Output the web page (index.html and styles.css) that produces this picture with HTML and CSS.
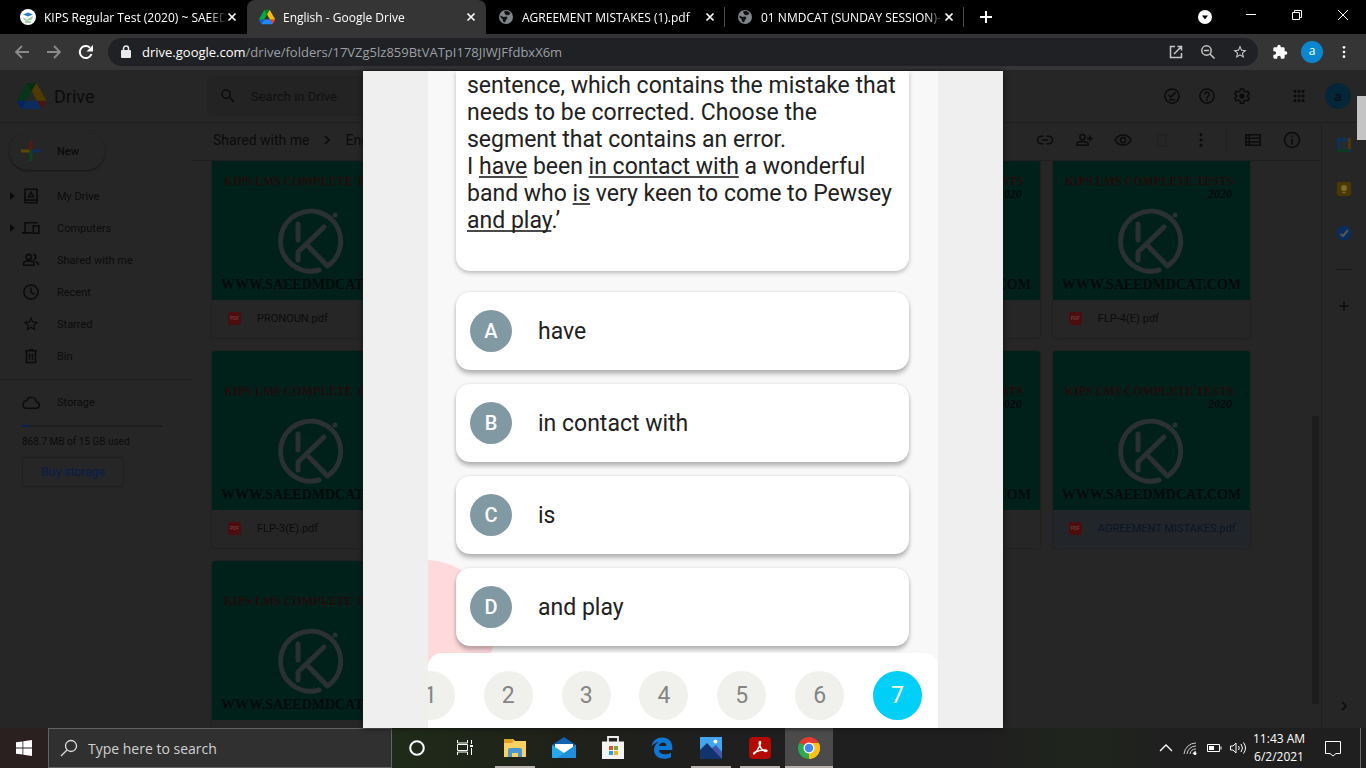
FILE: index.html
```html
<!DOCTYPE html>
<html lang="en">
<head>
  <meta charset="UTF-8" />
  <meta name="viewport" content="width=device-width, initial-scale=1.0" />
  <title>English - Google Drive</title>
  <link rel="stylesheet" href="styles.css">
</head>
<body>
  <svg class="defs" aria-hidden="true">
    <symbol id="drive-logo" viewBox="0 0 87 78">
      <path d="M6.6 66.85l3.85 6.65c.8 1.4 1.95 2.5 3.3 3.3L27.5 53H0c0 1.55.4 3.1 1.2 4.5z" fill="var(--c1)"/>
      <path d="M43.65 25L29.9 1.2c-1.35.8-2.5 1.9-3.3 3.3L1.2 48.5A9 9 0 0 0 0 53h27.5z" fill="var(--c2)"/>
      <path d="M73.55 76.8c1.35-.8 2.5-1.9 3.3-3.3l8.9-16c.8-1.4 1.2-2.95 1.2-4.5H59.8l5.85 11.5z" fill="var(--c3)"/>
      <path d="M43.65 25L57.4 1.2C56.05.4 54.5 0 52.9 0H34.4c-1.6 0-3.15.45-4.5 1.2z" fill="var(--c4)"/>
      <path d="M59.8 53H27.5L13.75 76.8c1.35.8 2.9 1.2 4.5 1.2h50.8c1.6 0 3.15-.45 4.5-1.2z" fill="var(--c5)"/>
      <path d="M73.4 26.5L60.7 4.5c-.8-1.4-1.95-2.5-3.3-3.3L43.65 25 59.8 53h27.45c0-1.55-.4-3.1-1.2-4.5z" fill="var(--c6)"/>
    </symbol>
    <symbol id="globe" viewBox="0 0 16 16">
      <circle cx="8" cy="8" r="7" fill="#80868b"/>
      <path d="M2.5 6.5l3 1.500 3-.5 1 1.500-1.500 2-1 2.500-2-1-.5-2.500-2-1.500zM6 2.500l3-.8 3.500 2.300-1.500 2-2 .2-2-1z" fill="#111"/>
    </symbol>
    <symbol id="close" viewBox="0 0 10 10"><path d="M1.500 1.500l7 7M8.500 1.500l-7 7" stroke="currentColor" stroke-width="1.700"/></symbol>
    <symbol id="search" viewBox="0 0 24 24"><path fill="currentColor" d="M20.500 19l-5.700-5.700a6.500 6.500 0 1 0-1.500 1.500l5.700 5.700zM5 9.500a4.500 4.500 0 1 1 9 0 4.500 4.500 0 0 1-9 0z"/></symbol>
    <symbol id="star" viewBox="0 0 24 24"><path fill="currentColor" d="M22 9.240l-7.190-.62L12 2 9.190 8.630 2 9.240l5.460 4.730L5.820 21 12 17.270 18.180 21l-1.630-7.030zM12 15.400l-3.760 2.270 1-4.280-3.320-2.880 4.380-.38L12 6.100l1.710 4.040 4.380.38-3.320 2.880 1 4.280z"/></symbol>
    <symbol id="more" viewBox="0 0 24 24"><g fill="currentColor"><circle cx="12" cy="5" r="2"/><circle cx="12" cy="12" r="2"/><circle cx="12" cy="19" r="2"/></g></symbol>
    <symbol id="chevron" viewBox="0 0 24 24"><path d="M9 6l6 6-6 6" fill="none" stroke="currentColor" stroke-width="2.500"/></symbol>
    <symbol id="k-logo" viewBox="2 0 70 70">
      <g fill="none" stroke="currentColor" stroke-width="5" stroke-linecap="round" stroke-linejoin="round">
        <path d="M24 18v16M50 21L24 46v8M33 39l20.500 21A30 30 0 1 0 45 64"/>
      </g>
      <circle cx="61" cy="9" r="2.500" fill="currentColor"/>
    </symbol>
  </svg>

  <header class="tabstrip">
    <div class="tab">
      <svg class="favicon" viewBox="0 0 16 16"><circle cx="8" cy="8" r="8" fill="#fff"/><path d="M3 5.500l5-2 5 2-5 2z" fill="#2c7fc4"/><path d="M3 8l4 3 6-4.500-1 4-5 1.500-3-1z" fill="#8fd08a"/><path d="M5 13h6" stroke="#4b9c57"/></svg>
      <span class="tab-title">KIPS Regular Test (2020) ~ SAEED</span>
      <button class="tab-close" aria-label="Close tab"><svg><use href="#close"/></svg></button>
    </div>
    <div class="tab active">
      <svg class="favicon bright"><use href="#drive-logo"/></svg>
      <span class="tab-title">English - Google Drive</span>
      <button class="tab-close" aria-label="Close tab"><svg><use href="#close"/></svg></button>
    </div>
    <div class="tab ruled">
      <svg class="favicon"><use href="#globe"/></svg>
      <span class="tab-title">AGREEMENT MISTAKES (1).pdf</span>
      <button class="tab-close" aria-label="Close tab"><svg><use href="#close"/></svg></button>
    </div>
    <div class="tab ruled">
      <svg class="favicon"><use href="#globe"/></svg>
      <span class="tab-title">01 NMDCAT (SUNDAY SESSION)-</span>
      <button class="tab-close" aria-label="Close tab"><svg><use href="#close"/></svg></button>
    </div>
    <button class="new-tab" aria-label="New tab"><svg viewBox="0 0 12 12"><path d="M6 0v12M0 6h12" stroke="#fff" stroke-width="2"/></svg></button>
    <div class="window-controls">
      <button aria-label="Search tabs"><svg viewBox="0 0 14 14"><circle cx="7" cy="7" r="7" fill="#fff"/><path d="M4 5.500h6L7 9.500z" fill="#000"/></svg></button>
      <button aria-label="Minimize"><svg viewBox="0 0 14 14"><path d="M2 6.500h10" stroke="#fff"/></svg></button>
      <button aria-label="Restore"><svg viewBox="0 0 14 14"><path d="M2.500 4.500h7v7h-7zM4.500 4.500v-2h7v7h-2" fill="none" stroke="#fff"/></svg></button>
      <button aria-label="Close"><svg viewBox="0 0 14 14"><path d="M2 2l10 10M12 2L2 12" stroke="#fff"/></svg></button>
    </div>
  </header>

  <nav class="toolbar">
    <button class="tool muted" aria-label="Back"><svg viewBox="0 0 16 16"><path d="M15 8H2M8 2L2 8l6 6" fill="none" stroke="currentColor" stroke-width="1.800"/></svg></button>
    <button class="tool muted" aria-label="Forward"><svg viewBox="0 0 16 16"><path d="M1 8h13M8 2l6 6-6 6" fill="none" stroke="currentColor" stroke-width="1.800"/></svg></button>
    <button class="tool" aria-label="Reload"><svg viewBox="0 0 16 16"><path d="M13.500 10A6 6 0 1 1 12 3.700" fill="none" stroke="currentColor" stroke-width="2"/><path d="M15 1v6.500H8.500z" fill="currentColor"/></svg></button>
    <div class="omnibox">
      <svg class="lock" viewBox="0 0 10 14"><path d="M1 5h8a1 1 0 0 1 1 1v6a1 1 0 0 1-1 1H1a1 1 0 0 1-1-1V6a1 1 0 0 1 1-1z" fill="#e8eaed"/><path d="M2.500 6V3.500a2.500 2.500 0 0 1 5 0V6" fill="none" stroke="#e8eaed" stroke-width="1.500"/></svg>
      <a class="url" href="#"><b>drive.google.com</b>/drive/folders/17VZg5lz859BtVATpI178JIWJFfdbxX6m</a>
      <button class="tool" aria-label="Open"><svg viewBox="0 0 16 16"><path d="M7 2.500H2.500v11h11V9M9.500 2.500h4v4M13.500 2.500L6 10" fill="none" stroke="currentColor" stroke-width="1.500"/></svg></button>
      <button class="tool" aria-label="Zoom"><svg viewBox="0 0 16 16"><circle cx="6.500" cy="6.500" r="4.700" fill="none" stroke="currentColor" stroke-width="1.500"/><path d="M4 6.500h5M10 10l4.500 4.500" stroke="currentColor" stroke-width="1.500"/></svg></button>
      <button class="tool" aria-label="Bookmark"><svg><use href="#star"/></svg></button>
    </div>
    <button class="tool" aria-label="Extensions"><svg viewBox="0 0 24 24"><path fill="currentColor" d="M20.500 11H19V7a2 2 0 0 0-2-2h-4V3.500a2.500 2.500 0 0 0-5 0V5H4a2 2 0 0 0-2 2v3.800h1.500a2.700 2.700 0 0 1 0 5.400H2V20c0 1.100.9 2 2 2h3.800v-1.500a2.700 2.700 0 0 1 5.400 0V22H17a2 2 0 0 0 2-2v-4h1.500a2.500 2.500 0 0 0 0-5z"/></svg></button>
    <button class="tool"><span class="profile">a</span></button>
    <button class="tool" aria-label="Menu"><svg><use href="#more"/></svg></button>
  </nav>

  <main class="drive">
    <header class="drive-header">
      <svg class="drive-mark"><use href="#drive-logo"/></svg>
      <span class="drive-name">Drive</span>
      <label class="drive-search">
        <svg><use href="#search"/></svg>
        <input type="text" placeholder="Search in Drive">
      </label>
      <div class="header-icons">
        <button aria-label="Ready for offline"><svg viewBox="0 0 24 24"><circle cx="12" cy="12" r="9.500" fill="none" stroke="currentColor" stroke-width="2"/><path d="M7.500 10.500l3 3L17 7M8 17h8" fill="none" stroke="currentColor" stroke-width="2"/></svg></button>
        <button aria-label="Support"><svg viewBox="0 0 24 24"><circle cx="12" cy="12" r="9.500" fill="none" stroke="currentColor" stroke-width="2"/><path d="M9 10a3 3 0 1 1 4.500 2.500c-1 .7-1.500 1-1.500 2.500M12 16v2.500" fill="none" stroke="currentColor" stroke-width="2"/></svg></button>
        <button aria-label="Settings"><svg viewBox="0 0 24 24"><path d="M10 2.500h4l.6 3 2.200 1.200 2.900-1 2 3.500-2.300 2v1.800l2.300 2-2 3.500-2.900-1-2.200 1.200-.6 3h-4l-.6-3-2.200-1.200-2.900 1-2-3.500 2.300-2v-1.800l-2.300-2 2-3.500 2.900 1 2.200-1.200z" fill="none" stroke="currentColor" stroke-width="2"/><circle cx="12" cy="12" r="3.500" fill="currentColor"/></svg></button>
        <button class="apps" aria-label="Google apps"><svg viewBox="0 0 24 24"><path d="M4 5h16M4 12h16M4 19h16" stroke="currentColor" stroke-width="4" stroke-dasharray="4 2"/></svg></button>
        <button class="account">a</button>
      </div>
    </header>

    <div class="drive-body">
      <aside class="sidebar">
        <button class="new-button">
          <svg viewBox="0 0 20 20"><path d="M10 0v10" stroke="#5a1712" stroke-width="3"/><path d="M10 9v11" stroke="#0b4420" stroke-width="3"/><path d="M0 10h8.500" stroke="#5c4700" stroke-width="3"/><path d="M11.500 10H20" stroke="#102d63" stroke-width="3"/></svg>
          New
        </button>
        <a class="nav-item" href="#"><i class="arrow"></i><svg viewBox="0 0 24 24"><path d="M4 3h16v18H4zM4 17.500h16" fill="none" stroke="currentColor" stroke-width="2.200"/><path d="M12 7l3.500 6h-7z" fill="none" stroke="currentColor" stroke-width="2"/></svg>My Drive</a>
        <a class="nav-item" href="#"><i class="arrow"></i><svg viewBox="0 0 24 24"><path d="M21 5H4v12M0 18.500h13M15 9h7.500v10H15z" fill="none" stroke="currentColor" stroke-width="2.200"/></svg>Computers</a>
        <a class="nav-item" href="#"><i></i><svg viewBox="0 0 24 24"><circle cx="9" cy="8" r="3.500" fill="none" stroke="currentColor" stroke-width="2.200"/><path d="M2 19v-2c0-5 14-5 14 0v2zM15 4.500a3.500 3.500 0 0 1 0 7M18 14c3 1 4 2 4 5" fill="none" stroke="currentColor" stroke-width="2.200"/></svg>Shared with me</a>
        <a class="nav-item" href="#"><i></i><svg viewBox="0 0 24 24"><circle cx="12" cy="12" r="9.500" fill="none" stroke="currentColor" stroke-width="2"/><path d="M12 6v6.500l4.500 2.500" fill="none" stroke="currentColor" stroke-width="2"/></svg>Recent</a>
        <a class="nav-item" href="#"><i></i><svg><use href="#star"/></svg>Starred</a>
        <a class="nav-item" href="#"><i></i><svg viewBox="0 0 24 24"><path d="M4 5h16M9 3.500h6M6 5v15.500h12V5M10 9v8M14 9v8" fill="none" stroke="currentColor" stroke-width="2"/></svg>Bin</a>
        <a class="nav-item storage" href="#"><i></i><svg viewBox="0 0 24 24"><path d="M19 10.500C18.500 3 8 2.500 6.500 9-.5 9.500 0 19 6 19h12.500c6 0 6-8 .5-8.500z" fill="none" stroke="currentColor" stroke-width="2"/></svg>Storage</a>
        <div class="quota"><div class="quota-used"></div></div>
        <p class="quota-text">868.7 MB of 15 GB used</p>
        <button class="buy">Buy storage</button>
      </aside>

      <section class="files">
        <div class="crumbs">
          <a href="#">Shared with me</a>
          <svg><use href="#chevron"/></svg>
          <a href="#">English</a>
          <div class="actions">
            <button aria-label="Get link"><svg viewBox="0 0 24 24"><path d="M10 7H7a5 5 0 0 0 0 10h3M14 7h3a5 5 0 0 1 0 10h-3M8 12h8" fill="none" stroke="currentColor" stroke-width="2"/></svg></button>
            <button aria-label="Share"><svg viewBox="0 0 24 24"><circle cx="10" cy="8" r="3.500" fill="none" stroke="currentColor" stroke-width="2"/><path d="M2.500 19v-2c0-4 15-4 15 0v2zM20 6v8M16 10h8" fill="none" stroke="currentColor" stroke-width="2"/></svg></button>
            <button aria-label="Preview"><svg viewBox="0 0 24 24"><path d="M1.500 12c4-9 17-9 21 0-4 9-17 9-21 0z" fill="none" stroke="currentColor" stroke-width="2"/><circle cx="12" cy="12" r="3.500" fill="none" stroke="currentColor" stroke-width="2"/></svg></button>
            <button class="off" aria-label="Remove"><svg viewBox="0 0 24 24"><path d="M5 5h14M7 5v15h10V5" fill="none" stroke="currentColor" stroke-width="2"/></svg></button>
            <button aria-label="More actions"><svg><use href="#more"/></svg></button>
            <span class="rule"></span>
            <button aria-label="List view"><svg viewBox="0 0 24 24"><path d="M2.500 5h19v14h-19zM2.500 9.500h19M2.500 14.500h19M7 5v14" fill="none" stroke="currentColor" stroke-width="2"/></svg></button>
            <button aria-label="View details"><svg viewBox="0 0 24 24"><circle cx="12" cy="12" r="10" fill="none" stroke="currentColor" stroke-width="2"/><path d="M12 6v2.500M12 10.500V18" stroke="currentColor" stroke-width="2.200"/></svg></button>
          </div>
        </div>
        <div class="scroller">
          <div class="grid" id="grid"></div>
        </div>
        <div class="files-thumb"></div>
      </section>

      <aside class="side-panel">
        <svg viewBox="0 0 16 16"><path d="M1 1h14v14H1z" fill="#0f3057"/><path d="M12 1h3v11h-3z" fill="#493800"/><path d="M1 12h11v3H1z" fill="#0b3c1f"/><path d="M4 4h8v8H4z" fill="#262b30"/></svg>
        <svg viewBox="0 0 16 16"><rect x="1" y="1" width="14" height="14" rx="2" fill="#4a3a00"/><circle cx="8" cy="7" r="3" fill="#7a6a30"/><path d="M6.500 11.500h3" stroke="#7a6a30" stroke-width="1.500"/></svg>
        <svg viewBox="0 0 16 16"><circle cx="8" cy="8" r="7.500" fill="#0c2d5a"/><path d="M4.500 9l2.500 2 5-6" fill="none" stroke="#555" stroke-width="2"/></svg>
        <hr>
        <svg viewBox="0 0 16 16"><path d="M8 3v10M3 8h10" stroke="#0c0c0c" stroke-width="1.500"/></svg>
        <svg class="collapse"><use href="#chevron"/></svg>
      </aside>
    </div>

    <article class="preview">
      <div class="phone">
        <div class="question">
          sentence, which contains the mistake that<br>
          needs to be corrected. Choose the<br>
          segment that contains an error.<br>
          I <u>have</u> been <u>in contact with</u> a wonderful<br>
          band who <u>is</u> very keen to come to Pewsey<br>
          <u>and play</u>.’
        </div>
        <button class="option"><span>A</span>have</button>
        <button class="option"><span>B</span>in contact with</button>
        <button class="option"><span>C</span>is</button>
        <button class="option"><span>D</span>and play</button>
        <div class="pager">
          <div class="pages">
            <button>1</button><button>2</button><button>3</button><button>4</button><button>5</button><button>6</button><button class="current">7</button>
          </div>
        </div>
      </div>
    </article>
    <div class="page-thumb"></div>
  </main>

  <footer class="taskbar">
    <button class="start" aria-label="Start"><svg viewBox="0 0 16 16"><path d="M0 2.300L6.500 1.400v6.200H0zM7.300 1.300L16 0v7.600H7.300zM0 8.400h6.500v6.200L0 13.700zM7.300 8.400H16V16l-8.700-1.300z" fill="#fff"/></svg></button>
    <label class="task-search">
      <svg viewBox="0 0 18 18"><circle cx="11" cy="7" r="5.500" fill="none" stroke="#ddd" stroke-width="1.300"/><path d="M7 11l-6 6" stroke="#ddd" stroke-width="1.300"/></svg>
      <input type="text" placeholder="Type here to search">
    </label>
    <div class="apps-row">
      <button aria-label="Cortana"><svg viewBox="0 0 24 24"><circle cx="12" cy="12" r="6.800" fill="none" stroke="#fff" stroke-width="2"/></svg></button>
      <button aria-label="Task view"><svg viewBox="0 0 24 24"><path d="M3.500 4v3h10V4M3.500 19v-3h10v3M3.500 8.500h10v6h-10zM17.500 4v4M17.500 12v7" fill="none" stroke="#fff"/><path d="M16 9h3v2h-3z" fill="#fff"/></svg></button>
      <button class="open" aria-label="File Explorer"><svg viewBox="0 0 24 24"><path d="M1 3h9l2 2h11v16H1z" fill="#f9d262"/><path d="M1 3h8l1.500 2L9 7H1z" fill="#e0a021"/><path d="M5 21v-7a2 2 0 0 1 2-2h10a2 2 0 0 1 2 2v7h-4v-4H9v4z" fill="#4a98cf"/></svg></button>
      <button aria-label="Mail"><svg viewBox="0 0 24 24"><path d="M0 9l12-8 12 8v5H0z" fill="#1063b0"/><path d="M3 8h18v5l-9 5-9-5z" fill="#fff"/><path d="M0 9l12 8L24 9v13H0z" fill="#28a8ea"/><path d="M24 9v13H5z" fill="#1f8fdb"/></svg></button>
      <button aria-label="Store"><svg viewBox="0 0 24 24"><path d="M7 6V1h10v5" fill="none" stroke="#eee" stroke-width="1.800"/><path d="M1 5.500h22V23H1z" fill="#f3f3f3"/><path d="M8 10h4v4H8z" fill="#d35230"/><path d="M13 10h4v4h-4z" fill="#7ba732"/><path d="M8 15h4v4H8z" fill="#2f9fd8"/><path d="M13 15h4v4h-4z" fill="#efb320"/></svg></button>
      <button aria-label="Edge"><svg viewBox="0 0 24 24"><path d="M1.500 10.500C2.500 4.500 7 1.500 12.300 1.500c6.500 0 10 4.500 10 9.800V14H9c.3 5 7.500 5.300 12 2.800v4.400C14 24.500 4 22.500 4 14c0-4 2-6.500 5-8-3.500.5-6 2-7.500 4.500zM9 10h7.500C16.500 5 9.500 5.500 9 10z" fill="#1078d4"/></svg></button>
      <button class="open" aria-label="Photos"><svg viewBox="0 0 24 24"><path d="M1 1h22v22H1z" fill="#42a5f0"/><path d="M13 12l4-3 6 7v7H8z" fill="#4458a6"/><path d="M1 14l7-7 15 16H1z" fill="#12346e"/><circle cx="16.500" cy="5.500" r="2" fill="#fff"/></svg></button>
      <button class="open" aria-label="Acrobat Reader"><svg viewBox="0 0 24 24"><rect x="1" y="1" width="22" height="22" rx="4" fill="#b30b00"/><path d="M6 18c-2-1 4-4 11-4 4 0 1 3-2 0-3-2-5-8-3-8.500 2 0-2 9.500-6 12.500z" fill="none" stroke="#fff" stroke-width="1.500"/></svg></button>
      <button class="open focused" aria-label="Chrome"><svg viewBox="0 0 24 24"><path d="M12 12L2.500 6.500A11 11 0 0 1 21.500 6.500z" fill="#e33b2e"/><path d="M12 12l9.500-5.500A11 11 0 0 1 12 23z" fill="#fbc116"/><path d="M12 12l0 11A11 11 0 0 1 2.500 6.500z" fill="#2da94f"/><path d="M12 7h9.800a11 11 0 0 1-9.800 16l4.500-8.500z" fill="#fbc116"/><circle cx="12" cy="12" r="5.500" fill="#fff"/><circle cx="12" cy="12" r="4.200" fill="#4285f4"/></svg></button>
    </div>
    <div class="tray">
      <svg viewBox="0 0 16 16"><path d="M2 11l6-6 6 6" fill="none" stroke="#fff" stroke-width="1.300"/></svg>
      <svg viewBox="0 0 16 16"><path d="M2 14A12 12 0 0 1 14 3M5 14a9 9 0 0 1 9-8M8 14a6 6 0 0 1 6-5M11 14a3 3 0 0 1 3-2.500" fill="none" stroke="#ccc"/><circle cx="13" cy="13.500" r="1.500" fill="#fff"/></svg>
      <svg viewBox="0 0 16 16"><path d="M1.500 4.500h12v7h-12zM15 6.500v3" fill="none" stroke="#fff"/><path d="M3 6h5v4H3z" fill="#fff"/></svg>
      <svg viewBox="0 0 16 16"><path d="M.5 6H3l3-3v10l-3-3H.5zM8.500 6q1.500 2 0 4M11 4q3 4 0 8M13.500 2.500q4 5.500 0 11" fill="none" stroke="#fff"/></svg>
    </div>
    <time class="clock">11:43 AM<br>6/2/2021</time>
    <button class="notify" aria-label="Notifications"><svg viewBox="0 0 18 18"><path d="M1.500 2.500h15v12H12l-3 2.500-3-2.500H1.500z" fill="none" stroke="#fff"/></svg></button>
  </footer>

  <script>
    // col is the grid column the card sits in
    const files = [
      { col: 1, name: "PRONOUN.pdf" },
      { col: 4, name: "" },
      { col: 5, name: "FLP-4(E).pdf" },
      { col: 1, name: "FLP-3(E).pdf" },
      { col: 4, name: "" },
      { col: 5, name: "AGREEMENT MISTAKES.pdf", selected: true },
      { col: 1, name: "" }
    ];

    const grid = document.getElementById("grid");
    files.forEach(file => {
      const card = document.createElement("div");
      card.className = "card col-" + file.col + (file.selected ? " selected" : "");
      card.innerHTML = `
        <div class="thumb">
          <p class="thumb-title">KIPS LMS COMPLETE TESTS</p>
          <p class="thumb-year">2020</p>
          <svg><use href="#k-logo"/></svg>
          <p class="thumb-site">WWW.SAEEDMDCAT.COM</p>
        </div>
        <div class="card-name"><span class="pdf">PDF</span>${file.name}</div>`;
      grid.appendChild(card);
    });
  </script>
</body>
</html>
```
FILE: styles.css
```css
* {
  box-sizing: border-box;
}

body {
  margin: 0;
  height: 100vh;
  display: flex;
  flex-direction: column;
  overflow: hidden;
  background: #262626;
  font-family: "Open Sans", "Noto Sans", sans-serif;
  font-size: 12px;
  color: #fff;
}

button {
  display: flex;
  align-items: center;
  justify-content: center;
  flex: none;
  padding: 0;
  border: none;
  background: none;
  font: inherit;
  color: inherit;
}

a {
  color: inherit;
  text-decoration: none;
}

p {
  margin: 0;
}

svg {
  flex: none;
}

.defs {
  position: absolute;
  width: 0;
  height: 0;
}

/* tabs */

.tabstrip {
  display: flex;
  height: 34px;
  flex: none;
  padding-left: 8px;
  background: #000;
}

.tab {
  display: flex;
  align-items: center;
  flex: 0 1 239px;
  min-width: 0;
  padding: 0 10px 0 12px;
}

.tab.active {
  background: #353535;
  border-radius: 8px 8px 0 0;
}

.tab.ruled {
  background: linear-gradient(#4a4a4a, #4a4a4a) right center / 1px 20px no-repeat;
}

.favicon {
  width: 16px;
  height: 16px;
  margin-right: 8px;
}

.bright {
  --c1: #0066da;
  --c2: #00ac47;
  --c3: #ea4335;
  --c4: #00832d;
  --c5: #2684fc;
  --c6: #ffba00;
}

.tab-title {
  flex: 1;
  overflow: hidden;
  white-space: nowrap;
  mask-image: linear-gradient(to right, #000 90%, transparent);
}

.tab-close svg {
  width: 10px;
  height: 10px;
}

.tab-close {
  width: 10px;
}

.new-tab {
  width: 44px;
}

.new-tab svg {
  width: 12px;
  height: 12px;
}

.window-controls {
  display: flex;
  margin-left: auto;
}

.window-controls button {
  width: 46px;
  height: 30px;
}

.window-controls button:first-child {
  height: 34px;
}

.window-controls svg {
  width: 14px;
  height: 14px;
}

/* address bar */

.toolbar {
  display: flex;
  align-items: center;
  flex: none;
  height: 36px;
  padding: 0 6px;
  background: #353535;
}

.tool {
  width: 32px;
  height: 28px;
}

.tool svg {
  width: 16px;
  height: 16px;
}

.muted {
  color: #8a8a8a;
}

.omnibox {
  display: flex;
  align-items: center;
  flex: 1;
  height: 28px;
  margin: 0 6px;
  padding: 0 2px 0 13px;
  border-radius: 14px;
  background: #202124;
  color: #c4c7c5;
}

.lock {
  width: 10px;
  height: 14px;
  margin-right: 11px;
}

.url {
  flex: 1;
  font-size: 13px;
  color: #9aa0a6;
}

.url b {
  font-weight: normal;
  color: #fff;
}

.profile {
  width: 22px;
  height: 22px;
  border-radius: 50%;
  background: #0b87d1;
  line-height: 20px;
}

/* drive */

.drive {
  position: relative;
  display: flex;
  flex-direction: column;
  flex: 1;
  min-height: 0;
  font-family: Roboto, sans-serif;
  font-size: 11px;
  color: #0b0b0b;
}

.drive-header {
  display: flex;
  align-items: center;
  flex: none;
  height: 53px;
  padding: 0 15px 0 17px;
  border-bottom: 1px solid #1f1f1f;
}

.drive-mark {
  --c1: #04245c;
  --c2: #06351a;
  --c3: #4a1410;
  --c4: #062d14;
  --c5: #0b2c60;
  --c6: #4d3b00;
  width: 29px;
  height: 26px;
}

.drive-name {
  width: 161px;
  padding-left: 8px;
  font-size: 18px;
}

.drive-search {
  display: flex;
  align-items: center;
  width: 52%;
  height: 40px;
  padding-left: 12px;
  gap: 14px;
  border-radius: 6px;
  background: #232323;
}

.drive-search svg {
  width: 18px;
  height: 18px;
}

.drive-search input,
.task-search input {
  flex: 1;
  min-width: 0;
  padding: 0;
  border: none;
  outline: none;
  background: none;
  font: inherit;
  font-size: 13px;
}

.drive-search input::placeholder {
  color: #101010;
}

.header-icons {
  display: flex;
  align-items: center;
  margin-left: auto;
}

.header-icons button {
  width: 35px;
}

.header-icons svg {
  width: 18px;
  height: 18px;
}

.header-icons .apps {
  margin-left: 22px;
}

.header-icons .apps svg {
  width: 16px;
  height: 16px;
}

.header-icons .account {
  width: 26px;
  height: 26px;
  margin-left: 9px;
  border-radius: 50%;
  background: #052538;
  font-size: 13px;
}

.drive-body {
  display: flex;
  flex: 1;
  min-height: 0;
}

.sidebar {
  width: 192px;
  flex: none;
  padding-top: 9px;
}

.new-button {
  justify-content: flex-start;
  width: 96px;
  height: 38px;
  margin: 0 0 10px 9px;
  padding-left: 12px;
  gap: 16px;
  border-radius: 19px;
  box-shadow: 0 1px 2px #151515;
  font-weight: 500;
}

.new-button svg {
  width: 20px;
  height: 20px;
}

.nav-item {
  display: flex;
  align-items: center;
  height: 32px;
}

.nav-item i {
  width: 6px;
  margin: 0 6px 0 10px;
}

.nav-item .arrow {
  border: 4px solid transparent;
  border-left: 5px solid #0b0b0b;
  border-right: none;
}

.nav-item svg {
  width: 18px;
  height: 18px;
  margin-right: 17px;
}

.storage {
  height: 46px;
  margin-top: 7px;
  border-top: 1px solid #1f1f1f;
}

.quota {
  width: 140px;
  height: 2px;
  margin: 0 0 8px 22px;
  background: #1e1e1e;
}

.quota-used {
  width: 5%;
  height: 2px;
  background: #0a1d5c;
}

.quota-text {
  margin-left: 22px;
  font-size: 10px;
  line-height: 14px;
}

.buy {
  width: 102px;
  height: 30px;
  margin: 8px 0 0 22px;
  border: 1px solid #1f1f1f;
  border-radius: 3px;
  font-size: 12px;
  font-weight: 500;
  color: #0c1f47;
}

.files {
  position: relative;
  display: flex;
  flex-direction: column;
  flex: 1;
  min-width: 0;
}

.crumbs {
  display: flex;
  align-items: center;
  flex: none;
  height: 38px;
  padding: 0 10px 3px 21px;
  border-bottom: 1px solid #1f1f1f;
  font-size: 14px;
}

.crumbs > svg {
  width: 16px;
  height: 16px;
  margin: 0 10px;
}

.actions {
  display: flex;
  align-items: center;
  margin-left: auto;
}

.actions button {
  width: 39px;
}

.actions svg {
  width: 18px;
  height: 18px;
}

.actions .off {
  color: #222;
}

.rule {
  width: 1px;
  height: 22px;
  margin: 0 6px;
  background: #1f1f1f;
}

.scroller {
  flex: 1;
  min-height: 0;
  overflow: hidden;
  padding: 0 71px 0 20px;
}

/* the list is scrolled part of a row down */
.grid {
  display: grid;
  grid-template-columns: repeat(5, 1fr);
  grid-auto-rows: 197px;
  gap: 13px;
  margin-top: -20px;
}

.col-1 {
  grid-column: 1;
}

.col-4 {
  grid-column: 4;
}

.col-5 {
  grid-column: 5;
}

.card {
  min-width: 0;
  overflow: hidden;
  border-radius: 3px;
  box-shadow: 0 0 1px 1px #222;
}

.thumb {
  display: flex;
  flex-direction: column;
  height: 159px;
  padding-top: 34px;
  background: #00211a;
  font-family: "Liberation Serif", serif;
  font-weight: bold;
  white-space: nowrap;
}

.thumb-title {
  padding-left: 12px;
  font-size: 12px;
  line-height: 13px;
  color: #240b0a;
}

.thumb-year {
  padding-right: 18px;
  font-size: 12px;
  font-style: italic;
  line-height: 12px;
  text-align: right;
  color: #020a08;
}

.thumb svg {
  align-self: center;
  width: 70px;
  height: 70px;
  margin-top: 6px;
  color: #2b3030;
}

.thumb-site {
  font-size: 14px;
  line-height: 18px;
  text-align: center;
  color: #020a08;
}

.card-name {
  display: flex;
  align-items: center;
  height: 38px;
  padding: 0 0 2px 16px;
  gap: 16px;
  white-space: nowrap;
}

.selected .card-name {
  background: #22252a;
  color: #0a1526;
}

.pdf {
  width: 13px;
  height: 13px;
  border-radius: 2px;
  background: #4b0d0d;
  color: #7a4a4a;
  font-size: 5px;
  line-height: 13px;
  text-align: center;
}

.files-thumb {
  position: absolute;
  top: 44%;
  right: 2px;
  bottom: 24px;
  width: 7px;
  margin-top: 27px;
  background: #1c1c1c;
}

.side-panel {
  display: flex;
  flex-direction: column;
  align-items: center;
  flex: none;
  width: 45px;
  padding: 14px 0;
  gap: 28px;
  border-left: 1px solid #1f1f1f;
}

.side-panel svg {
  width: 16px;
  height: 16px;
}

.side-panel hr {
  width: 16px;
  margin: 0;
  border: none;
  border-top: 1px solid #1a1a1a;
}

.side-panel .collapse {
  margin-top: auto;
}

.page-thumb {
  position: absolute;
  top: 26px;
  right: 0;
  width: 9px;
  height: 44px;
  background: #c4c4c4;
}

/* opened file */

.preview {
  position: absolute;
  top: 1px;
  bottom: 0;
  left: 50%;
  width: 640px;
  margin-left: -320px;
  display: flex;
  justify-content: center;
  background: #efefef;
  box-shadow: 0 0 5px #111;
}

.phone {
  position: relative;
  display: flex;
  flex-direction: column;
  width: 510px;
  padding: 0 29px 0 28px;
  gap: 14px;
  overflow: hidden;
  background: #f8f8f8;
  color: #212121;
  font-size: 23px;
}

.phone::before {
  content: "";
  position: absolute;
  left: -73px;
  bottom: 28px;
  width: 140px;
  height: 140px;
  border-radius: 50%;
  background: #ffd9dc;
}

.question {
  margin-bottom: 7px;
  padding: 1px 11px 37px;
  border-radius: 0 0 14px 14px;
  background: #fff;
  box-shadow: 0 2px 4px rgba(0, 0, 0, 0.25);
  line-height: 27px;
  white-space: nowrap;
}

.question u {
  text-decoration-color: #4a4a4a;
  text-decoration-thickness: 2px;
  text-underline-offset: 2px;
  text-decoration-skip-ink: none;
}

.option {
  position: relative;
  justify-content: flex-start;
  height: 78px;
  padding: 0 14px;
  gap: 26px;
  border-radius: 14px;
  background: #fff;
  box-shadow: 0 4px 4px rgba(0, 0, 0, 0.25), 0 0 3px rgba(0, 0, 0, 0.12);
}

.option span {
  width: 42px;
  height: 42px;
  border-radius: 50%;
  background: #8199a3;
  color: #fff;
  font-size: 20px;
  font-weight: 500;
  line-height: 42px;
}

.pager {
  position: relative;
  flex: none;
  height: 75px;
  margin: -7px -29px 0 -28px;
  padding: 18px 16px 0 0;
  border-radius: 14px 14px 0 0;
  background: #fff;
}

.pages {
  display: flex;
  justify-content: space-between;
  margin-left: -22px;
}

.pages button {
  width: 49px;
  height: 49px;
  border-radius: 50%;
  background: #f0f1ed;
  color: #858585;
}

.pages .current {
  background: #00cff8;
  color: #fff;
}

/* taskbar */

.taskbar {
  display: flex;
  align-items: center;
  flex: none;
  height: 40px;
  padding-right: 5px;
  background: linear-gradient(to right, #2a2020 0, #2a2020 48px, #1f2b19 390px, #1f2119 560px, #1f1f1f 700px, #1f1f1f 72%, #1f251c 80%, #1f1f1f 85%);
}

.start {
  width: 48px;
  height: 40px;
}

.start svg {
  width: 16px;
  height: 16px;
}

.task-search {
  display: flex;
  align-items: center;
  width: 344px;
  height: 40px;
  padding-left: 11px;
  gap: 10px;
  border: 1px solid #636363;
  background: #303030;
}

.task-search svg {
  width: 18px;
  height: 18px;
}

.task-search input {
  font-size: 14px;
}

.task-search input::placeholder {
  color: #d0d0d0;
}

.apps-row {
  display: flex;
  gap: 1px;
  margin-left: 1px;
}

.apps-row button {
  width: 48px;
  height: 40px;
}

.apps-row svg {
  width: 24px;
  height: 24px;
}

.apps-row .open {
  background: linear-gradient(#b5b0ac, #b5b0ac) center bottom / 40px 2px no-repeat;
}

.apps-row .focused {
  background: linear-gradient(#b5b0ac, #b5b0ac) center bottom / 48px 2px no-repeat #4b4b4b;
}

.tray {
  display: flex;
  gap: 8px;
  margin: 0 7px 0 auto;
}

.tray svg {
  width: 16px;
  height: 16px;
}

.clock {
  width: 52px;
  line-height: 18px;
  text-align: center;
  white-space: nowrap;
}

.notify {
  width: 56px;
  height: 40px;
  border-right: 1px solid #6a6a6a;
}

.notify svg {
  width: 18px;
  height: 18px;
}
```
